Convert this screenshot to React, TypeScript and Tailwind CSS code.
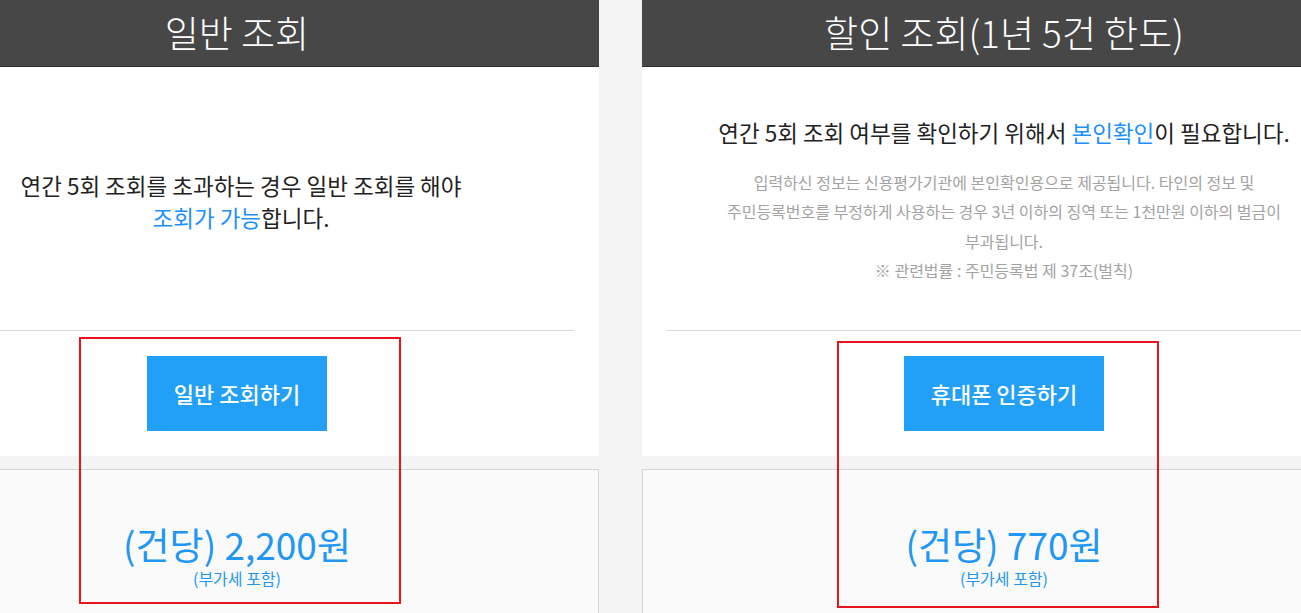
const FONT = "font-['Noto_Sans_CJK_KR','Noto_Sans',sans-serif]"

function PriceBox({ price }: { price: string }) {
  return (
    <div className="mt-[13px] h-[200px] border border-[#d5d5d5] bg-[#fafafa] pt-[53px] text-center text-[#2196f3]">
      <div className="text-[37px] leading-[42px]">(건당) {price}</div>
      <div className="mt-[3px] text-[16px] leading-[20px]">(부가세 포함)</div>
    </div>
  )
}

function Panel({
  title,
  button,
  price,
  children,
}: {
  title: string
  button: string
  price: string
  children: React.ReactNode
}) {
  return (
    <section className="w-[724px] shrink-0">
      {/* 헤더 */}
      <div className="flex h-[67px] items-center justify-center border-b border-[#2f2f2f] bg-[#474747] text-[37px] font-light text-white">
        {title}
      </div>

      <div className="bg-white">
        <div className="flex h-[263px] flex-col items-center justify-center pt-[4px] text-center">
          {children}
        </div>
        <div className="mx-[25px] h-px bg-[#d9d9d9]" />
        <div className="flex justify-center py-[25px]">
          <button className="h-[75px] bg-[#22a0f8] px-[27px] text-[22px] font-medium text-white">
            {button}
          </button>
        </div>
      </div>

      <PriceBox price={price} />
    </section>
  )
}

export default function App() {
  return (
    <div className={`relative h-[613px] w-full overflow-hidden bg-[#f4f4f4] ${FONT}`}>
      <div className="ml-[-125px] flex gap-[43px]">
        <Panel title="일반 조회" button="일반 조회하기" price="2,200원">
          <p className="pl-2 text-[22.5px] leading-[32px] text-[#222]">
            연간 5회 조회를 초과하는 경우 일반 조회를 해야
            <br />
            <span className="text-[#1e8fff]">조회가 가능</span>합니다.
          </p>
        </Panel>

        <Panel title="할인 조회(1년 5건 한도)" button="휴대폰 인증하기" price="770원">
          <p className="text-[22.5px] leading-[32px] text-[#222]">
            연간 5회 조회 여부를 확인하기 위해서 <span className="text-[#1e8fff]">본인확인</span>이 필요합니다.
          </p>
          <p className="mt-[20px] text-[16px] leading-[29.5px] text-[#a3a3a3]">
            입력하신 정보는 신용평가기관에 본인확인용으로 제공됩니다. 타인의 정보 및
            <br />
            주민등록번호를 부정하게 사용하는 경우 3년 이하의 징역 또는 1천만원 이하의 벌금이
            <br />
            부과됩니다.
            <br />※ 관련법률 : 주민등록법 제 37조(벌칙)
          </p>
        </Panel>
      </div>

      {/* 강조 표시 */}
      <div className="absolute left-[79px] top-[337px] h-[267px] w-[322px] border-2 border-[#e8141b]" />
      <div className="absolute left-[837px] top-[341px] h-[267px] w-[322px] border-2 border-[#e8141b]" />
    </div>
  )
}
